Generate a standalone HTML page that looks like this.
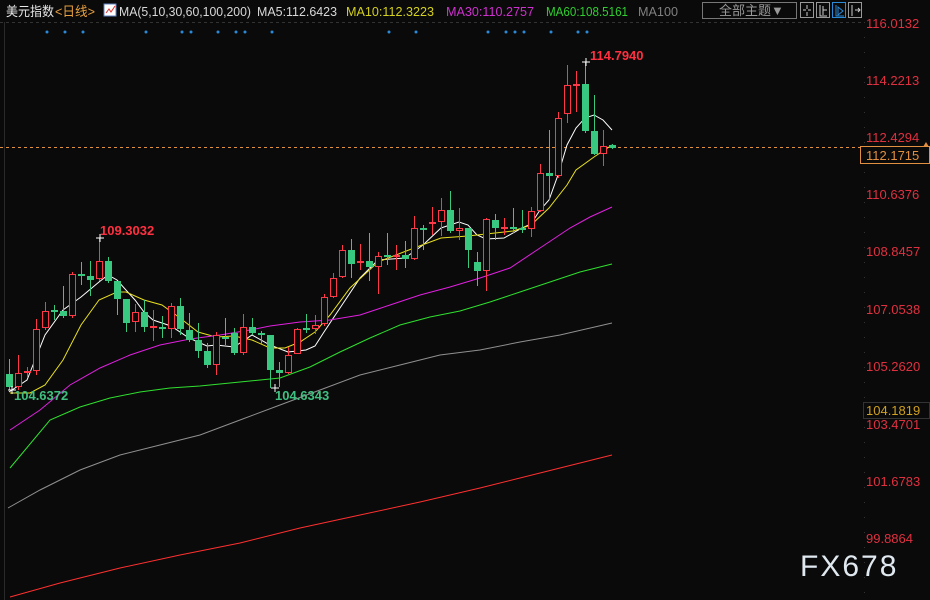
<!DOCTYPE html>
<html><head><meta charset="utf-8"><style>
html,body{margin:0;padding:0;background:#0a0a0a;width:930px;height:600px;overflow:hidden}
svg{display:block}
text{font-family:"Liberation Sans","Noto Sans CJK SC",sans-serif}
</style></head><body>
<svg id="s" width="930" height="600" xmlns="http://www.w3.org/2000/svg">
<rect width="930" height="600" fill="#0a0a0a"/>
<line x1="4.5" y1="22" x2="4.5" y2="600" stroke="#2a2a2a"/>
<line x1="864.5" y1="22" x2="864.5" y2="600" stroke="#333" stroke-dasharray="1,14"/>
<line x1="0" y1="22.5" x2="862" y2="22.5" stroke="#333" stroke-dasharray="3,3"/>
<!-- header -->
<text x="6" y="16" font-size="13" fill="#e8e8e8" textLength="48" lengthAdjust="spacingAndGlyphs">美元指数</text>
<text x="55" y="16" font-size="13" fill="#e8a040" textLength="40" lengthAdjust="spacingAndGlyphs">&lt;日线&gt;</text>
<rect x="104" y="4" width="12" height="12" fill="#fff" stroke="#6080c0"/>
<polyline points="106,13 109,9 111,12 115,6" fill="none" stroke="#e03030" stroke-width="1"/>
<text x="119" y="16" font-size="13" fill="#d8d8d8" textLength="132" lengthAdjust="spacingAndGlyphs">MA(5,10,30,60,100,200)</text>
<text x="257" y="16" font-size="13" fill="#d8d8d8" textLength="80" lengthAdjust="spacingAndGlyphs">MA5:112.6423</text>
<text x="346" y="16" font-size="13" fill="#d4d020" textLength="88" lengthAdjust="spacingAndGlyphs">MA10:112.3223</text>
<text x="446" y="16" font-size="13" fill="#d030d0" textLength="88" lengthAdjust="spacingAndGlyphs">MA30:110.2757</text>
<text x="546" y="16" font-size="13" fill="#30d030" textLength="82" lengthAdjust="spacingAndGlyphs">MA60:108.5161</text>
<text x="638" y="16" font-size="13" fill="#808080" textLength="40" lengthAdjust="spacingAndGlyphs">MA100</text>
<rect x="702.5" y="2.5" width="94" height="16" fill="none" stroke="#777"/>
<text x="719" y="15" font-size="13" fill="#999">全部主题▼</text>
<rect x="800.5" y="2.5" width="13" height="15" fill="none" stroke="#999"/>
<rect x="816.5" y="2.5" width="13" height="15" fill="none" stroke="#999"/>
<rect x="832.5" y="2.5" width="13" height="15" fill="none" stroke="#2a8ad8"/>
<rect x="848.5" y="2.5" width="13" height="15" fill="none" stroke="#999"/>
<path d="M807 5v4M807 12v4M803 10h3M808 10h3" stroke="#ccc"/>
<path d="M820 5v11h7M823 6v9M823 10h4" stroke="#ccc" fill="none"/>
<path d="M836 5v11h8M838 7l5 4-5 4z" stroke="#2a8ad8" fill="none"/>
<path d="M852 5v11M855 10h5M858 8l2 2-2 2" stroke="#ccc" fill="none"/>
<!-- axis labels -->
<g font-size="13" fill="#e03040">
<text x="866" y="28">116.0132</text>
<text x="866" y="85">114.2213</text>
<text x="866" y="142">112.4294</text>
<text x="866" y="199">110.6376</text>
<text x="866" y="256">108.8457</text>
<text x="866" y="314">107.0538</text>
<text x="866" y="371">105.2620</text>
<text x="866" y="429">103.4701</text>
<text x="866" y="486">101.6783</text>
<text x="866" y="543">99.8864</text>
</g>
<line x1="0" y1="147.5" x2="930" y2="147.5" stroke="#e09040" stroke-dasharray="3,3"/>
<rect x="860.5" y="146.5" width="69" height="17" fill="#0a0a0a" stroke="#e09040"/>
<text x="866" y="160" font-size="13" fill="#e09040">112.1715</text>
<path d="M923 147l3-5 3 5z" fill="#e09040"/>
<rect x="863.5" y="402.5" width="66" height="16" fill="#0a0a0a" stroke="#333"/>
<text x="866" y="415" font-size="13" fill="#d0a020">104.1819</text>
<g fill="#2a8ad8" id="dots"></g>
<g id="ma"></g>
<g id="c"></g>
<text x="100" y="235" font-size="13" font-weight="bold" fill="#ff3040">109.3032</text>
<text x="590" y="60" font-size="13" font-weight="bold" fill="#ff3040">114.7940</text>
<text x="14" y="400" font-size="13" font-weight="bold" fill="#40c080">104.6372</text>
<text x="275" y="400" font-size="13" font-weight="bold" fill="#40c080">104.6343</text>
<text x="800" y="576" font-size="30" fill="#e0e8f0" letter-spacing="2">FX678</text>
</svg>
<script>
var N="http://www.w3.org/2000/svg";
function el(p,t,a){var e=document.createElementNS(N,t);for(var k in a)e.setAttribute(k,a[k]);p.appendChild(e);return e;}
var D=document.getElementById('dots');
[47,65,83,146,182,191,218,236,245,272,389,416,488,506,515,524,551,578,587].forEach(function(x){el(D,'circle',{cx:x,cy:32,r:1.5});});
var M=document.getElementById('ma');
var mas=[
['#fff',"9,392 27,380 45,335 63,310 81,297 99,282 108,275 117,280 135,300 144,312 153,320 171,326 189,338 207,346 216,345 234,347 252,335 270,345 288,352 306,350 315,346 324,332 342,305 360,278 378,260 405,258 423,245 441,228 459,222 468,225 477,235 486,239 504,238 522,228 531,224 540,210 549,200 558,175 567,145 576,128 585,118 594,115 603,120 612,130"],
['#e8e020',"10,393 30,393 45,385 63,360 81,325 99,300 117,292 126,292 144,300 162,305 180,318 198,332 216,337 234,336 252,340 270,348 285,348 300,342 315,332 330,315 350,288 378,262 396,255 414,248 441,238 468,236 486,234 513,231 531,225 549,208 567,185 576,170 594,157 612,145"],
['#e020e0',"10,430 40,410 70,385 100,368 130,355 160,345 190,339 220,335 250,330 270,326 300,322 330,320 360,315 390,305 420,295 450,287 480,278 510,268 540,248 570,228 590,217 612,207"],
['#30e030',"10,468 50,420 80,407 110,398 140,392 170,388 200,386 240,382 280,378 310,367 340,352 370,338 400,325 430,317 460,311 490,302 520,292 550,282 580,272 612,264"],
['#909090',"8,508 40,490 80,470 120,455 160,445 200,435 240,420 280,405 320,390 360,375 400,365 440,355 480,350 520,342 560,335 612,323"],
['#ff3030',"10,597 60,583 120,568 180,555 240,543 300,528 360,515 420,502 480,488 540,473 612,455"]];
mas.forEach(function(m){el(M,'polyline',{points:m[1],fill:'none',stroke:m[0],'stroke-width':1});});
var C=document.getElementById('c');
var d=[[9,374,387,359,390,'g'],[18,373,387,355,390,'r'],[27,371,373,367,377,'r'],[36,329,371,319,375,'r'],[45,311,328,302,330,'r'],[54,310,312,305,320,'g'],[63,311,316,286,318,'g'],[72,274,316,272,318,'r'],[81,274,275,262,285,'g'],[90,276,280,261,296,'g'],[99,261,279,238,281,'r'],[108,261,281,257,283,'g'],[117,281,299,281,315,'g'],[126,299,323,299,332,'g'],[135,312,322,304,332,'r'],[144,312,327,300,332,'g'],[153,326,327,310,341,'r'],[162,327,329,316,338,'g'],[171,306,329,303,338,'r'],[180,306,329,298,335,'g'],[189,330,340,313,342,'g'],[198,340,351,323,358,'g'],[207,351,365,343,368,'g'],[216,335,365,332,375,'r'],[225,337,339,318,345,'g'],[234,333,353,328,355,'g'],[243,327,353,314,355,'r'],[252,327,333,318,335,'g'],[261,333,335,331,345,'g'],[270,335,370,335,388,'g'],[279,370,373,362,387,'g'],[288,355,373,347,374,'r'],[297,329,354,328,354,'r'],[306,328,330,314,333,'g'],[315,325,329,315,334,'r'],[324,297,324,294,326,'r'],[333,278,297,273,298,'r'],[342,250,277,245,278,'r'],[351,250,264,239,278,'g'],[360,261,263,244,270,'r'],[369,261,267,233,281,'g'],[378,256,267,252,294,'r'],[387,255,256,233,265,'g'],[396,255,256,245,270,'r'],[405,255,259,241,268,'g'],[414,228,259,216,260,'r'],[423,228,229,225,250,'g'],[432,222,223,207,235,'r'],[441,210,222,198,236,'r'],[450,210,231,191,233,'g'],[459,228,231,208,240,'r'],[468,228,250,228,268,'g'],[477,262,271,252,286,'g'],[486,219,271,218,291,'r'],[495,220,228,214,240,'g'],[504,227,228,218,235,'r'],[513,227,229,208,233,'g'],[522,228,230,210,233,'g'],[531,211,229,207,237,'r'],[540,173,211,164,212,'r'],[549,173,176,130,200,'g'],[558,118,176,112,178,'r'],[567,85,114,65,123,'r'],[576,84,86,71,112,'r'],[585,84,131,62,133,'g'],[594,131,154,95,155,'g'],[603,146,154,130,166,'r'],[612,145,148,144,149,'g']];
d.forEach(function(c){var col=c[5]=='r'?'#ff3848':'#38c880';
el(C,'line',{x1:c[0]+.5,x2:c[0]+.5,y1:c[3],y2:c[4],stroke:col});
var h=Math.max(1,c[2]-c[1]);
if(c[5]=='r'){ if(h<3) el(C,'rect',{x:c[0]-3,y:c[1],width:7,height:2,fill:col}); else el(C,'rect',{x:c[0]-2.5,y:c[1]+.5,width:6,height:h-1,fill:'#0a0a0a',stroke:col});}
else el(C,'rect',{x:c[0]-3,y:c[1],width:7,height:Math.max(2,h),fill:col});});
el(C,'path',{d:'M96 238h8M100 234v8M8 390h8M12 386v8M271 388h8M275 384v8M582 62h8M586 58v8',stroke:'#fff'});
</script>
</body></html>
